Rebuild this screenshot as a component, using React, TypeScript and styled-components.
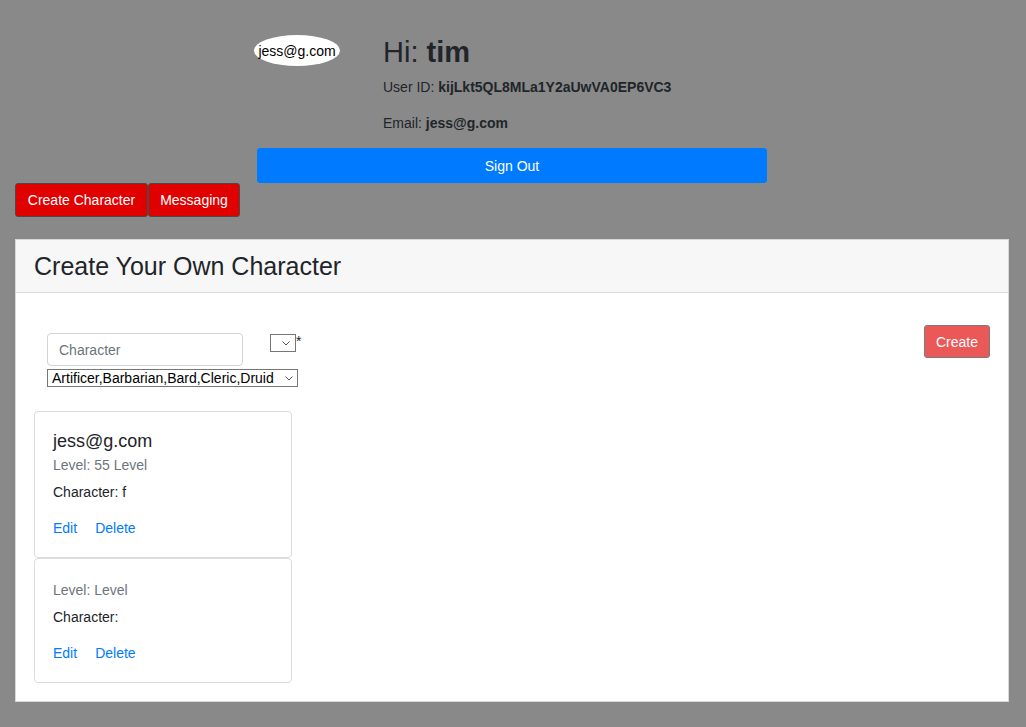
import React from "react";
import styled, { createGlobalStyle } from "styled-components";

const Global = createGlobalStyle`
  html, body { margin: 0; padding: 0; background: #898989; }
  body { font-family: "Liberation Sans", Arial, sans-serif; color: #212529; }
  * { box-sizing: border-box; }
`;

const Page = styled.div`
  min-height: 727px;
  padding: 0 17px 26px 15px;
`;

const Profile = styled.div`
  display: flex;
  padding: 35px 0 0 239px;
`;

const AvatarCol = styled.div`
  width: 129px;
  flex: none;
`;

const Avatar = styled.div`
  width: 86px;
  height: 31px;
  border-radius: 50%;
  background: #fff;
  color: #000;
  font-size: 14px;
  display: flex;
  align-items: center;
  justify-content: center;
`;

const Info = styled.div`
  display: flex;
  flex-direction: column;
`;

const Greeting = styled.h3`
  margin: 0 0 8px;
  font-size: 29px;
  font-weight: 400;
  line-height: 34px;
  color: #212529;
  b { font-weight: 700; }
`;

const InfoLine = styled.p`
  margin: 0 0 15px;
  font-size: 14px;
  line-height: 21px;
  color: #212529;
  b { font-weight: 700; }
`;

const SignOut = styled.button`
  display: block;
  margin: -1px 0 0 242px;
  width: 510px;
  height: 35px;
  border: none;
  border-radius: 3px;
  background: #007bff;
  color: #fff;
  font-family: inherit;
  font-size: 14px;
`;

const NavRow = styled.div`
  display: flex;
`;

const RedButton = styled.button<{ $w: number }>`
  width: ${(p) => p.$w}px;
  height: 34px;
  padding: 0;
  background: #e00000;
  border: 1px solid #4a4a4a;
  border-radius: 3px;
  color: #fff;
  font-family: inherit;
  font-size: 14px;
`;

const Card = styled.div`
  margin-top: 22px;
  background: #fff;
  border: 1px solid #d8d8d8;
`;

const CardHeader = styled.div`
  height: 53px;
  display: flex;
  align-items: center;
  padding: 0 18px;
  background: #f7f7f7;
  border-bottom: 1px solid #d9d9d9;
`;

const Title = styled.h2`
  margin: 0;
  font-size: 25px;
  font-weight: 400;
  color: #212529;
`;

const CardBody = styled.div`
  padding: 32px 18px 18px;
`;

const FormRow = styled.div`
  display: flex;
  justify-content: space-between;
  align-items: flex-start;
  padding-left: 13px;
`;

const FormFields = styled.div`
  display: flex;
  flex-direction: column;
  align-items: flex-start;
  gap: 3px;
  padding-top: 8px;
`;

const FieldLine = styled.div`
  display: flex;
  align-items: flex-start;
`;

const TextInput = styled.input`
  width: 196px;
  height: 33px;
  padding: 0 11px;
  border: 1px solid #ced4da;
  border-radius: 4px;
  font-family: inherit;
  font-size: 14px;
  color: #495057;
  &::placeholder { color: #6c757d; }
`;

const SelectWrap = styled.span`
  position: relative;
  display: inline-flex;
`;

const Select = styled.select<{ $w: number }>`
  appearance: none;
  -webkit-appearance: none;
  width: ${(p) => p.$w}px;
  height: 18px;
  padding: 0 14px 0 4px;
  border: 1px solid #767676;
  border-radius: 0;
  background: #fff;
  font-family: inherit;
  font-size: 14px;
  line-height: 16px;
  color: #000;
  outline: none;
`;

const Chevron = styled.svg<{ $r: number }>`
  position: absolute;
  right: ${(p) => p.$r}px;
  top: 7px;
  width: 8px;
  height: 5px;
  pointer-events: none;
`;

const SmallSelectWrap = styled.div`
  display: flex;
  align-items: flex-start;
  margin: 1px 0 0 27px;
  font-size: 14px;
  line-height: 14px;
`;

const CreateButton = styled.button`
  width: 66px;
  height: 33px;
  background: #eb5858;
  border: 1px solid #7b7b7b;
  border-radius: 3px;
  color: #fff;
  font-family: inherit;
  font-size: 14px;
`;

const CharList = styled.div`
  margin-top: 24px;
  width: 258px;
  display: flex;
  flex-direction: column;
`;

const CharCard = styled.div`
  border: 1px solid #dcdcdc;
  border-radius: 4px;
  padding: 18px;
`;

const CharName = styled.div`
  font-size: 18px;
  line-height: 22px;
  color: #212529;
  margin-bottom: 3px;
`;

const Level = styled.div`
  font-size: 14px;
  line-height: 21px;
  color: #6c757d;
  margin-top: 3px;
`;

const CharLine = styled.div`
  font-size: 14px;
  line-height: 21px;
  color: #212529;
  margin-top: 6px;
`;

const Links = styled.div`
  display: flex;
  gap: 18px;
  margin-top: 15px;
  font-size: 14px;
  line-height: 21px;
`;

const Link = styled.a`
  color: #007bff;
  text-decoration: none;
`;

const chars = [
  { name: "jess@g.com", level: "55 Level", character: "f" },
  { name: "", level: "Level", character: "" },
];

function Dropdown({ width, right, children }: { width: number; right: number; children?: React.ReactNode }) {
  return (
    <SelectWrap>
      <Select $w={width}>{children}</Select>
      <Chevron $r={right} viewBox="0 0 8 5" fill="none">
        <path d="M0.5 0.5 L4 4 L7.5 0.5" stroke="#555" strokeWidth="1" />
      </Chevron>
    </SelectWrap>
  );
}

export default function App() {
  return (
    <>
      <Global />
      <Page>
        <Profile>
          <AvatarCol>
            <Avatar>jess@g.com</Avatar>
          </AvatarCol>
          <Info>
            <Greeting>
              Hi: <b>tim</b>
            </Greeting>
            <InfoLine>
              User ID: <b>kijLkt5QL8MLa1Y2aUwVA0EP6VC3</b>
            </InfoLine>
            <InfoLine>
              Email: <b>jess@g.com</b>
            </InfoLine>
          </Info>
        </Profile>
        <SignOut>Sign Out</SignOut>
        <NavRow>
          <RedButton $w={133}>Create Character</RedButton>
          <RedButton $w={92}>Messaging</RedButton>
        </NavRow>
        <Card>
          <CardHeader>
            <Title>Create Your Own Character</Title>
          </CardHeader>
          <CardBody>
            <FormRow>
              <FormFields>
                <FieldLine>
                  <TextInput placeholder="Character" />
                  <SmallSelectWrap>
                    <Dropdown width={26} right={6}>
                      <option></option>
                    </Dropdown>
                    *
                  </SmallSelectWrap>
                </FieldLine>
                <Dropdown width={251} right={5}>
                  <option>Artificer,Barbarian,Bard,Cleric,Druid</option>
                </Dropdown>
              </FormFields>
              <CreateButton>Create</CreateButton>
            </FormRow>
            <CharList>
              {chars.map((c, i) => (
                <CharCard key={i}>
                  {c.name && <CharName>{c.name}</CharName>}
                  <Level>Level: {c.level}</Level>
                  <CharLine>Character: {c.character}</CharLine>
                  <Links>
                    <Link href="#">Edit</Link>
                    <Link href="#">Delete</Link>
                  </Links>
                </CharCard>
              ))}
            </CharList>
          </CardBody>
        </Card>
      </Page>
    </>
  );
}
